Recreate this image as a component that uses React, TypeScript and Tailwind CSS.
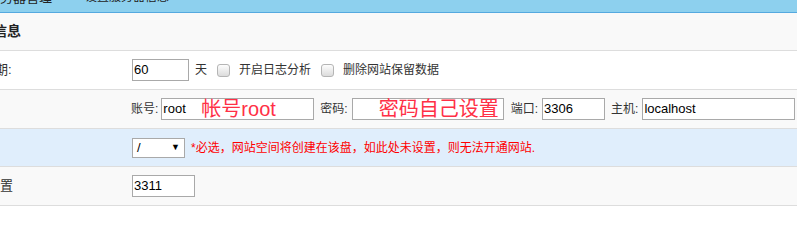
import React from "react";

const font = "font-['Liberation_Sans','Noto_Sans_CJK_SC',sans-serif]";

const Checkbox = () => (
  <span className="inline-block w-[13px] h-[13px] rounded-[3px] border border-[#b5b5b5] bg-gradient-to-b from-[#fdfdfd] to-[#dcdcdc]" />
);

const TextInput = ({ w, value, children }: { w: string; value?: string; children?: React.ReactNode }) => (
  <div className={`relative h-[22px] ${w} border border-[#a9a9a9] bg-white flex items-center pl-[1px] text-[13px] text-black`}>
    {value}
    {children}
  </div>
);

const Row = ({ bg, h, label, shift, children }: { bg: string; h: string; label?: string; shift?: string; children: React.ReactNode }) => (
  <div className={`flex items-center ${h} ${bg} border-b border-[#dddddd]`}>
    <div className="w-[132px] shrink-0 overflow-hidden whitespace-nowrap">
      {label && <span className={`inline-block ${shift} text-[13px] text-[#333]`}>{label}</span>}
    </div>
    {children}
  </div>
);

export default function App() {
  return (
    <div className={`w-[797px] h-[210px] bg-white overflow-hidden ${font} text-[12px] text-[#333]`}>
      {/* 顶部蓝色标签栏 */}
      <div className="h-[13px] bg-[#8dd0ee] border-b border-[#55a9df] overflow-hidden flex whitespace-nowrap">
        <span className="-mt-[9px] -ml-[13px] text-[13px] leading-[13px] text-[#222]">服务器管理</span>
        <span className="-mt-[9px] ml-[33px] text-[12px] leading-[13px] text-[#222]">设置服务器信息</span>
      </div>

      {/* 标题 */}
      <div className="h-[38px] bg-[#f9f9f9] border-b border-[#dddddd] flex items-center overflow-hidden whitespace-nowrap">
        <span className="-ml-[35px] text-[14px] font-bold text-[#222]">基本信息</span>
      </div>

      <Row bg="bg-white" h="h-[39px]" label="日志保留期:" shift="-ml-[57px]">
        <TextInput w="w-[57px]" value="60" />
        <span className="ml-[6px]">天</span>
        <span className="ml-[10px] flex"><Checkbox /></span>
        <span className="ml-[9px]">开启日志分析</span>
        <span className="ml-[10px] flex"><Checkbox /></span>
        <span className="ml-[9px]">删除网站保留数据</span>
      </Row>

      <Row bg="bg-[#f9f9f9]" h="h-[39px]">
        <div className="-ml-[1px] flex items-center">
          <span>账号:</span>
          <div className="ml-[3px]">
            <TextInput w="w-[153px]" value="root">
              <span className="absolute left-[39px] top-[-2px] text-[20px] leading-[24px] text-[#ff3046]">帐号root</span>
            </TextInput>
          </div>
          <span className="ml-[6px]">密码:</span>
          <div className="ml-[4px]">
            <TextInput w="w-[152px]">
              <span className="absolute left-[26px] top-[-2px] text-[20px] leading-[24px] text-[#ff3046]">密码自己设置</span>
            </TextInput>
          </div>
          <span className="ml-[7px]">端口:</span>
          <div className="ml-[4px]">
            <TextInput w="w-[63px]" value="3306" />
          </div>
          <span className="ml-[6px]">主机:</span>
          <div className="ml-[4px]">
            <TextInput w="w-[153px]" value="localhost" />
          </div>
        </div>
      </Row>

      <Row bg="bg-[#e0eefc]" h="h-[38px]">
        <div className="h-[20px] w-[53px] border border-[#a9a9a9] bg-white flex items-center justify-between px-[4px] text-[13px] text-black">
          <span>/</span>
          <span className="text-[9px]">▼</span>
        </div>
        <span className="ml-[6px] text-[12px] text-[#ff0000] whitespace-nowrap">*必选，网站空间将创建在该盘，如此处未设置，则无法开通网站.</span>
      </Row>

      <Row bg="bg-[#f9f9f9]" h="h-[39px]" label="端口设置" shift="-ml-[39px]">
        <TextInput w="w-[63px]" value="3311" />
      </Row>
    </div>
  );
}
